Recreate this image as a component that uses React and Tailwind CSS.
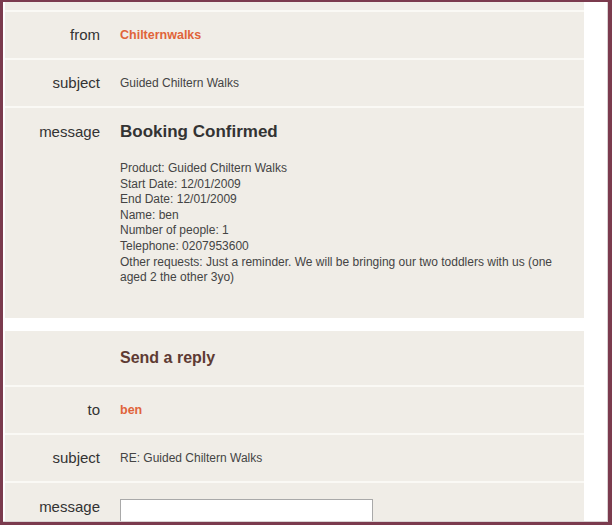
export default function App() {
  const label = "w-[95px] shrink-0 text-right text-[15px] leading-[24px] text-[#333]";
  const body = [
    "Product: Guided Chiltern Walks",
    "Start Date: 12/01/2009",
    "End Date: 12/01/2009",
    "Name: ben",
    "Number of people: 1",
    "Telephone: 0207953600",
  ];
  return (
    <div className="w-[612px] h-[525px] overflow-hidden bg-[#7b3b4e] pl-[3px] pt-[2px] pr-[4px] pb-[3px] font-['Liberation_Sans',Arial,sans-serif]">
      <div className="h-full overflow-hidden bg-white pl-[2px] pr-[23px] border-r border-b border-[#d8d2d2]">
        {/* Panel 1 */}
        <div className="bg-[#f0ede7]">
          <div className="h-[8px]" />
          <div className="flex h-[48px] items-center border-t-2 border-[#faf9f5]">
            <div className={label}>from</div>
            <div className="pl-[20px] text-[12.5px] font-bold text-[#e0643a]">Chilternwalks</div>
          </div>
          <div className="flex h-[48px] items-center border-t-2 border-[#faf9f5]">
            <div className={label}>subject</div>
            <div className="pl-[20px] text-[12px] text-[#444]">Guided Chiltern Walks</div>
          </div>
          <div className="flex h-[212px] items-start border-t-2 border-[#faf9f5] pt-[12px]">
            <div className={label}>message</div>
            <div className="pl-[20px] w-[480px]">
              <div className="text-[17px] leading-[24px] font-bold text-[#333]">Booking Confirmed</div>
              <div className="mt-[17px] text-[12px] leading-[15.6px] text-[#444]">
                {body.map((l) => (
                  <div key={l}>{l}</div>
                ))}
                <div>Other requests: Just a reminder. We will be bringing our two toddlers with us (one aged 2 the other 3yo)</div>
              </div>
            </div>
          </div>
        </div>
        <div className="h-[13px]" />
        {/* Panel 2 */}
        <div className="bg-[#f0ede7] h-[260px]">
          <div className="flex h-[54px] items-center">
            <div className="w-[95px] shrink-0" />
            <div className="pl-[20px] text-[16px] font-bold text-[#5e3a33]">Send a reply</div>
          </div>
          <div className="flex h-[48px] items-center border-t-2 border-[#faf9f5]">
            <div className={label}>to</div>
            <div className="pl-[20px] text-[12.5px] font-bold text-[#e0643a]">ben</div>
          </div>
          <div className="flex h-[48px] items-center border-t-2 border-[#faf9f5]">
            <div className={label}>subject</div>
            <div className="pl-[20px] text-[12px] text-[#444]">RE: Guided Chiltern Walks</div>
          </div>
          <div className="flex items-start border-t-2 border-[#faf9f5] pt-[12px]">
            <div className={label}>message</div>
            <div className="pl-[20px] pt-[4px]">
              <div className="w-[253px] h-[80px] bg-white border border-[#a9a9a9]" />
            </div>
          </div>
        </div>
      </div>
    </div>
  );
}
